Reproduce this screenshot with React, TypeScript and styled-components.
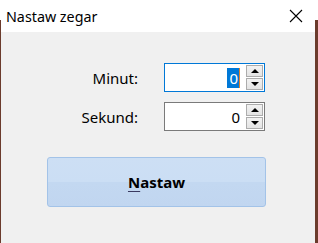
import React from "react";
import styled, { createGlobalStyle } from "styled-components";

const Global = createGlobalStyle`
  html, body { margin: 0; padding: 0; }
  body { width: 318px; height: 243px; overflow: hidden; font-family: "Noto Sans", "Open Sans", sans-serif; }
`;

const Desktop = styled.div`
  width: 318px;
  height: 243px;
  display: flex;
  background: linear-gradient(#ffffff 0 20px, #6b3b2c 20px);
`;

const Window = styled.div`
  flex: 1;
  margin: 0 3px 0 1px;
  display: flex;
  flex-direction: column;
  background: #f0f0f0;
`;

const TitleBar = styled.div`
  height: 32px;
  background: #ffffff;
  display: flex;
  align-items: center;
  justify-content: space-between;
  padding: 0 12px 0 5px;
`;

const Title = styled.span`
  font-size: 14.3px;
  color: #000;
  margin-top: 0px;
`;

const Close = styled.svg`
  width: 14px;
  height: 14px;
`;

const Body = styled.div`
  flex: 1;
  padding: 31px 0 0 0;
  display: flex;
  flex-direction: column;
`;

const Form = styled.div`
  display: grid;
  grid-template-columns: 137px 101px;
  column-gap: 26px;
  row-gap: 10px;
  align-items: center;
`;

const Label = styled.span`
  justify-self: end;
  font-size: 15px;
  color: #000;
  margin-top: 1px;
`;

const Spin = styled.div<{ $focused?: boolean }>`
  height: 29px;
  box-sizing: border-box;
  border: 1px solid ${(p) => (p.$focused ? "#0078d7" : "#7a7a7a")};
  background: #fff;
  display: flex;
  align-items: stretch;
  padding: 1px;
`;

const ValueArea = styled.div`
  flex: 1;
  display: flex;
  align-items: center;
  justify-content: flex-end;
  padding-right: 6px;
  font-size: 15px;
  color: #000;
`;

const Selected = styled.span`
  background: #0078d7;
  color: #fff;
  line-height: 20px;
  padding: 0 1px 0 2px;
  border-right: 1px solid #e0802a;
`;

const Arrows = styled.div`
  width: 17px;
  display: flex;
  flex-direction: column;
  gap: 1px;
`;

const ArrowBtn = styled.div<{ $down?: boolean }>`
  flex: 1;
  box-sizing: border-box;
  border: 1px solid #acacac;
  background: linear-gradient(#f2f2f2, #e3e3e3);
  display: flex;
  align-items: center;
  justify-content: center;
  &::after {
    content: "";
    width: 0;
    height: 0;
    border-left: 4px solid transparent;
    border-right: 4px solid transparent;
    ${(p) =>
      p.$down
        ? "border-top: 4px solid #000;"
        : "border-bottom: 4px solid #000;"}
  }
`;

const Button = styled.button`
  margin: 26px 0 0 46px;
  width: 219px;
  height: 50px;
  box-sizing: border-box;
  border: 1px solid #a3c3e8;
  border-radius: 3px;
  background: linear-gradient(#cddff4 0%, #cbdef4 50%, #c3d8f1 51%, #c1d6f0 100%);
  font-family: "Noto Sans", "Open Sans", sans-serif;
  font-weight: bold;
  font-size: 15px;
  color: #000;
  padding: 0;
`;

const Mnemonic = styled.span`
  text-decoration: underline;
  text-decoration-color: #3a3a60;
  text-underline-offset: 3px;
`;

export default function App() {
  return (
    <>
      <Global />
      <Desktop>
        <Window>
          <TitleBar>
            <Title>Nastaw zegar</Title>
            <Close viewBox="0 0 14 14">
              <path d="M1 1 L13 13 M13 1 L1 13" stroke="#000" strokeWidth="1.1" fill="none" />
            </Close>
          </TitleBar>
          <Body>
            <Form>
              <Label>Minut:</Label>
              <Spin $focused>
                <ValueArea>
                  <Selected>0</Selected>
                </ValueArea>
                <Arrows>
                  <ArrowBtn />
                  <ArrowBtn $down />
                </Arrows>
              </Spin>
              <Label>Sekund:</Label>
              <Spin>
                <ValueArea>0</ValueArea>
                <Arrows>
                  <ArrowBtn />
                  <ArrowBtn $down />
                </Arrows>
              </Spin>
            </Form>
            <Button>
              <Mnemonic>N</Mnemonic>astaw
            </Button>
          </Body>
        </Window>
      </Desktop>
    </>
  );
}
